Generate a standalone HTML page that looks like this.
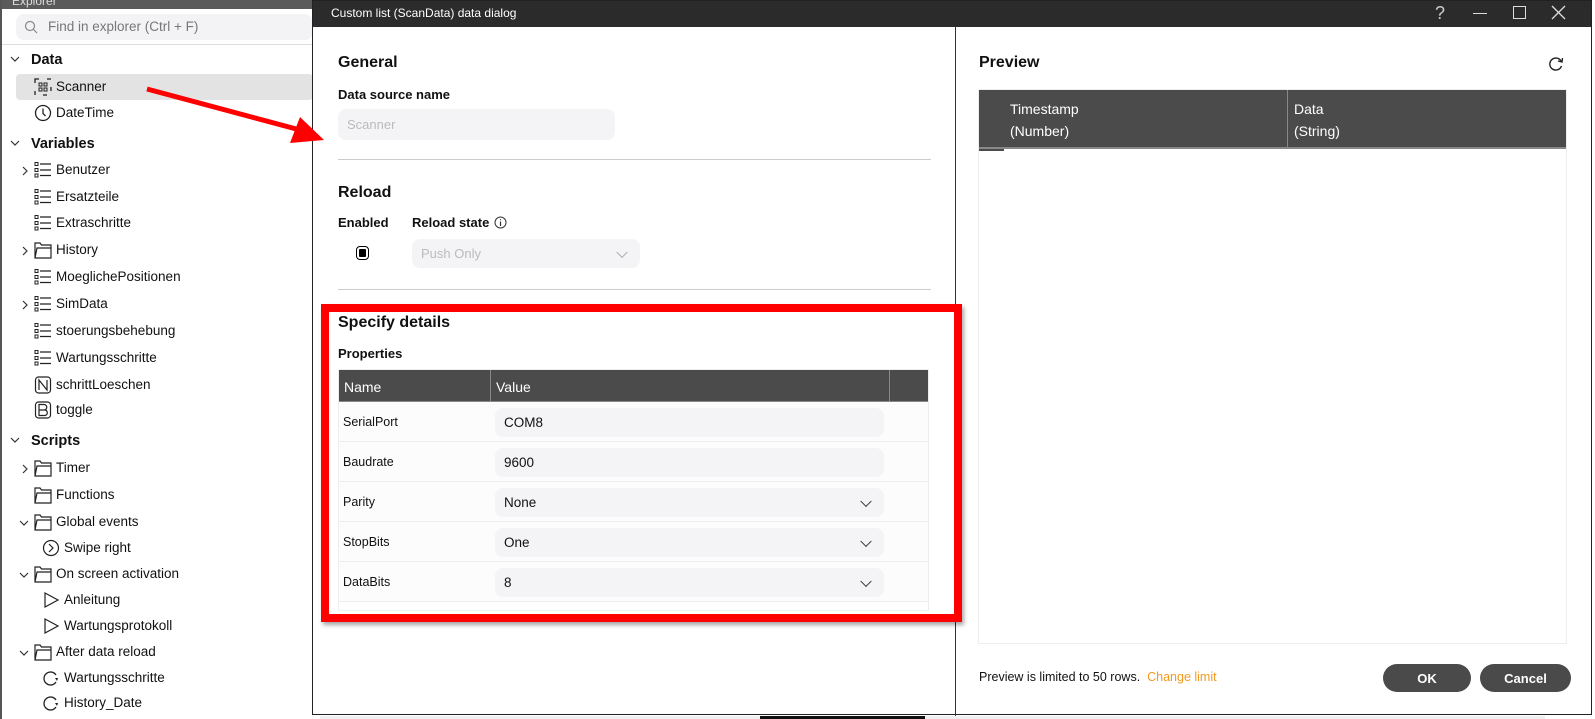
<!DOCTYPE html>
<html><head><meta charset="utf-8"><style>
*{box-sizing:border-box;margin:0;padding:0}
body{width:1595px;height:719px;overflow:hidden;background:#fff;font-family:"Liberation Sans",Arial,sans-serif;color:#111;position:relative;font-size:13px}
.abs{position:absolute}
.side{left:0;top:0;width:313px;height:719px;background:#fff;border-left:2px solid #555}
.row{position:absolute;font-size:13.5px;line-height:16px;white-space:nowrap}
.hd{font-weight:bold;font-size:14.5px}
.ico{position:absolute;}
.dlg{left:312px;top:0;width:1280px;height:715px;background:#fff;border:1px solid #222}
.tb{left:0;top:0;width:100%;height:26px;background:#2b2b2b;color:#fff;font-size:12px}
h2{position:absolute;font-size:16px;font-weight:bold}
.lbl{position:absolute;font-size:13px;font-weight:bold;color:#111}
.inp{position:absolute;background:#f4f4f7;border-radius:8px;font-size:13px;padding-left:9px;display:flex;align-items:center}
.chev{position:absolute;right:14px;top:50%;width:8px;height:8px;border-right:1.5px solid #333;border-bottom:1.5px solid #333;transform:translateY(-70%) rotate(45deg)}
.btn{position:absolute;background:#4a4a4a;color:#fff;font-weight:bold;font-size:13px;border-radius:14px;display:flex;align-items:center;justify-content:center}
</style></head><body>
<div class="abs side">
 <div class="abs" style="left:0;top:0;width:311px;height:9px;background:#5a5a5a;color:#ddd;font-size:12px;line-height:2px;padding-left:10px;overflow:hidden">Explorer</div>
 <div class="abs" style="left:14px;top:14px;width:297px;height:26px;background:#f3f3f6;border-radius:8px"></div>
 <svg class="ico" style="left:22px;top:20px" width="14" height="14"><circle cx="6" cy="6" r="4.5" fill="none" stroke="#888" stroke-width="1.2"/><path d="M9.5 9.5L13 13" stroke="#888" stroke-width="1.2"/></svg>
 <div class="row" style="left:46px;top:19px;color:#777">Find in explorer (Ctrl + F)</div>
 <div class="abs" style="left:0;top:44px;width:311px;height:1px;background:#ddd"></div>
 <div class="abs" style="left:14px;top:74px;width:297px;height:26px;background:#e3e3e3;border-radius:4px"></div>
</div>
<div id="tree"></div>
<div class="abs dlg">
 <div class="abs tb"><span style="position:absolute;left:18px;top:5px">Custom list (ScanData) data dialog</span>
  <span style="position:absolute;left:1122px;top:2px;font-size:18px;color:#ccc">?</span>
  <div class="abs" style="left:1160px;top:12px;width:14px;height:1px;background:#ddd"></div>
  <div class="abs" style="left:1200px;top:5px;width:13px;height:13px;border:1.3px solid #ddd"></div>
  <svg class="abs" style="left:1238px;top:4px" width="15" height="15"><path d="M1 1L14 14M14 1L1 14" stroke="#ddd" stroke-width="1.3"/></svg>
 </div>
 <div class="abs" style="left:642px;top:26px;width:1px;height:689px;background:#333"></div>
 <h2 style="left:25px;top:53px">General</h2>
 <div class="lbl" style="left:25px;top:86px">Data source name</div>
 <div class="inp" style="left:25px;top:108px;width:277px;height:31px;color:#bbb">Scanner</div>
 <div class="abs" style="left:25px;top:158px;width:593px;height:1px;background:#ccc"></div>
 <h2 style="left:25px;top:183px">Reload</h2>
 <div class="lbl" style="left:25px;top:214px">Enabled</div>
 <div class="lbl" style="left:99px;top:214px">Reload state</div>
 <svg class="abs" style="left:181px;top:215px" width="13" height="13"><circle cx="6.5" cy="6.5" r="5.5" fill="none" stroke="#333"/><path d="M6.5 5.5V10M6.5 3.2v1" stroke="#333" stroke-width="1.2"/></svg>
 <div class="abs" style="left:43px;top:245px;width:13px;height:14px;border:1.5px solid #000;border-radius:4px;padding:2px"><div style="width:100%;height:100%;background:#000;border-radius:1px"></div></div>
 <div class="inp" style="left:99px;top:238px;width:228px;height:29px;color:#bbb">Push Only<span class="chev" style="border-color:#aaa"></span></div>
 <div class="abs" style="left:25px;top:288px;width:593px;height:1px;background:#ccc"></div>
 <h2 style="left:25px;top:313px">Specify details</h2>
 <div class="lbl" style="left:25px;top:345px">Properties</div>
 <div class="abs" style="left:25px;top:368px;width:591px;height:242px;border:1px solid #eee;background:#fff">
  <div class="abs" style="left:0;top:0;width:589px;height:32px;background:#4b4b4b;color:#fff;font-size:14px;border-bottom:1px solid #888">
   <span class="abs" style="left:5px;top:9px">Name</span>
   <div class="abs" style="left:151px;top:0;width:1px;height:32px;background:#888"></div>
   <span class="abs" style="left:157px;top:9px">Value</span>
   <div class="abs" style="left:550px;top:0;width:1px;height:32px;background:#888"></div>
  </div>
 </div>
 <div id="props"></div>
 <h2 style="left:666px;top:53px">Preview</h2>
 <svg class="abs" style="left:1234px;top:54px" width="18" height="18"><path d="M14 6A6 6 0 1 0 14.5 11" fill="none" stroke="#222" stroke-width="1.4"/><path d="M11 6L15 7L15.5 3" fill="none" stroke="#222" stroke-width="1.4"/></svg>
 <div class="abs" style="left:665px;top:88px;width:589px;height:555px;border:1px solid #eee">
  <div class="abs" style="left:0;top:0;width:587px;height:59px;background:#4b4b4b;color:#fff;font-size:14px;line-height:22px;border-bottom:2px solid #888">
   <div class="abs" style="left:31px;top:8px">Timestamp<br>(Number)</div>
   <div class="abs" style="left:308px;top:0;width:1px;height:59px;background:#888"></div>
   <div class="abs" style="left:315px;top:8px">Data<br>(String)</div>
  </div>
  <div class="abs" style="left:0;top:59px;width:25px;height:2px;background:#4b4b4b"></div>
 </div>
 <div class="abs" style="left:666px;top:669px;font-size:12.5px">Preview is limited to 50 rows. <span style="color:#f39a1e">&nbsp;Change limit</span></div>
 <div class="btn" style="left:1070px;top:663px;width:88px;height:28px">OK</div>
 <div class="btn" style="left:1167px;top:663px;width:91px;height:28px">Cancel</div>
</div>
<div class="abs" style="left:1592px;top:0;width:3px;height:715px;background:#fff"></div>
<div class="abs" style="left:320px;top:716px;width:440px;height:3px;background:#f0f0f3"></div>
<div class="abs" style="left:760px;top:716px;width:165px;height:3px;background:#111"></div>
<div class="abs" style="left:925px;top:716px;width:620px;height:3px;background:#f0f0f3"></div>
<div class="abs" style="left:321px;top:304px;width:641px;height:318px;border:8px solid #ff0000;box-shadow:2px 3px 4px rgba(0,0,0,.35)"></div>
<svg class="abs" style="left:0;top:0" width="400" height="200"><path d="M147 89L300 130" stroke="#ff0000" stroke-width="5"/><path d="M324 140L290 143L300 117Z" fill="#ff0000"/></svg>
<script>
var T=document.getElementById('tree'),h='';
var list=[[60,'Data',0,'v',null,1],[87,'Scanner',34,'','qr'],[113,'DateTime',34,'','clock'],[144,'Variables',0,'v',null,1],
[170,'Benutzer',34,'>','list'],[197,'Ersatzteile',34,'','list'],[223,'Extraschritte',34,'','list'],[250,'History',34,'>','folder'],
[277,'MoeglichePositionen',34,'','list'],[304,'SimData',34,'>','list'],[331,'stoerungsbehebung',34,'','list'],[358,'Wartungsschritte',34,'','list'],
[385,'schrittLoeschen',34,'','N'],[410,'toggle',34,'','B'],[441,'Scripts',0,'v',null,1],[468,'Timer',34,'>','folder'],[495,'Functions',34,'','folder'],
[522,'Global events',34,'v','folder'],[548,'Swipe right',42,'','swipe'],[574,'On screen activation',34,'v','folder'],[600,'Anleitung',42,'','play'],
[626,'Wartungsprotokoll',42,'','play'],[652,'After data reload',34,'v','folder'],[678,'Wartungsschritte',42,'','reload'],[703,'History_Date',42,'','reload']];
var icons={qr:'<rect x="1" y="1" width="16" height="16" fill="none" stroke="#222" stroke-dasharray="4 8" stroke-width="1.3"/><rect x="5" y="5" width="3" height="3" fill="none" stroke="#222"/><rect x="10" y="5" width="3" height="3" fill="none" stroke="#222"/><rect x="5" y="10" width="3" height="3" fill="none" stroke="#222"/><rect x="10" y="10" width="3" height="3" fill="none" stroke="#222"/>',
clock:'<circle cx="9" cy="9" r="7.5" fill="none" stroke="#222" stroke-width="1.3"/><path d="M9 4.5V9.5L11.5 12" fill="none" stroke="#222" stroke-width="1.3"/>',
list:'<rect x="1" y="1.5" width="3" height="3" fill="none" stroke="#222"/><rect x="1" y="7.5" width="3" height="3" fill="none" stroke="#222"/><rect x="1" y="13" width="3" height="3" fill="none" stroke="#222"/><path d="M6 3H17M6 9H17M6 14.5H17" stroke="#222" stroke-width="1.3"/>',
folder:'<path d="M1 17V2H6L7.5 4H17V17ZM1 17L3 7H17" fill="none" stroke="#222" stroke-width="1.2"/>',
N:'<rect x="1.5" y="1" width="15" height="16" rx="3" fill="none" stroke="#222" stroke-width="1.2"/><path d="M5 14V4L13 14V4" fill="none" stroke="#222" stroke-width="1.2"/>',
B:'<rect x="1.5" y="1" width="15" height="16" rx="3" fill="none" stroke="#222" stroke-width="1.2"/><path d="M5 3.5H10A2.7 2.7 0 0 1 10 9H5ZM5 9H11A2.8 2.8 0 0 1 11 14.5H5ZM5 3.5V14.5" fill="none" stroke="#222" stroke-width="1.2"/>',
swipe:'<circle cx="9" cy="9" r="7.5" fill="none" stroke="#222" stroke-width="1.2"/><path d="M7 5L11 9L7 13" fill="none" stroke="#222" stroke-width="1.2"/>',
play:'<path d="M3 2L16 9L3 16Z" fill="none" stroke="#222" stroke-width="1.2"/>',
reload:'<path d="M14 6A6.5 6.5 0 1 0 14 13" fill="none" stroke="#222" stroke-width="1.3"/><path d="M13 9L16 9L15 12Z" fill="#222"/>'};
list.forEach(function(r){var y=r[0],x=r[2];
 if(r[5]){h+='<div class="row hd" style="left:31px;top:'+(y-8)+'px">'+r[1]+'</div>';h+='<svg class="ico" style="left:10px;top:'+(y-4)+'px" width="10" height="8"><path d="M1 1L5 5L9 1" fill="none" stroke="#333" stroke-width="1.2"/></svg>';return;}
 if(r[3]=='>')h+='<svg class="ico" style="left:'+(x-13)+'px;top:'+(y-4)+'px" width="8" height="10"><path d="M2 1L6 5L2 9" fill="none" stroke="#333" stroke-width="1.2"/></svg>';
 if(r[3]=='v')h+='<svg class="ico" style="left:'+(x-15)+'px;top:'+(y-2)+'px" width="10" height="8"><path d="M1 1L5 5L9 1" fill="none" stroke="#333" stroke-width="1.2"/></svg>';
 h+='<svg class="ico" style="left:'+x+'px;top:'+(y-9)+'px" width="18" height="18">'+icons[r[4]]+'</svg>';
 h+='<div class="row" style="left:'+(x+22)+'px;top:'+(y-8)+'px">'+r[1]+'</div>';});
T.innerHTML=h;
var P=document.getElementById('props'),p='';
[['SerialPort','COM8',0],['Baudrate','9600',0],['Parity','None',1],['StopBits','One',1],['DataBits','8',1]].forEach(function(r,i){
 var y=401+i*40;
 p+='<div class="abs" style="left:26px;top:'+y+'px;width:589px;height:40px;background:#fcfcfd;border-bottom:1px solid #eee"></div>';
 p+='<div class="abs" style="left:30px;top:'+(y+13)+'px;font-size:12.5px">'+r[0]+'</div>';
 p+='<div class="inp" style="left:182px;top:'+(y+6)+'px;width:389px;height:29px;color:#111;font-size:13.5px">'+r[1]+(r[2]?'<span class="chev"></span>':'')+'</div>';});
P.innerHTML=p;
</script>
</body></html>
